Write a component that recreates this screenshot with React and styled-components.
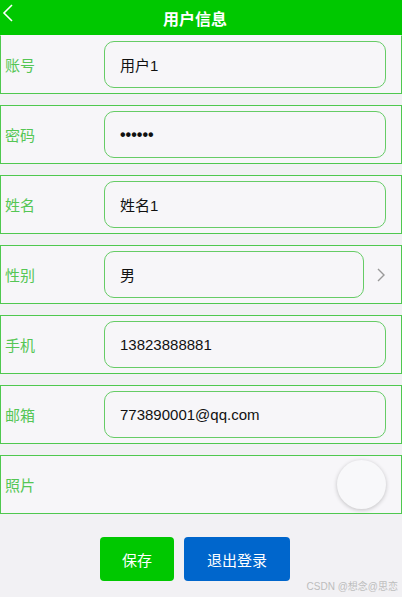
import React from 'react';
import styled, { createGlobalStyle } from 'styled-components';

const GlobalStyle = createGlobalStyle`
  html, body {
    margin: 0;
    padding: 0;
    background: #f2f1f4;
    font-family: "Noto Sans CJK SC", "Noto Sans", sans-serif;
  }
`;

const Page = styled.div`
  width: 402px;
  height: 597px;
  position: relative;
  overflow: hidden;
  background: #f2f1f4;
`;

const Header = styled.div`
  height: 35px;
  background: #00c800;
  display: flex;
  align-items: center;
  justify-content: center;
  position: relative;
  color: #fff;
  font-size: 16px;
  font-weight: 700;
  padding-right: 12px;
`;

const Back = styled.svg`
  position: absolute;
  left: 2px;
  top: 3px;
`;

const Form = styled.div`
  display: flex;
  flex-direction: column;
  gap: 11px;
`;

const Row = styled.div`
  height: 59px;
  box-sizing: border-box;
  border: 1px solid #4fc84f;
  border-top-color: ${(p) => (p.$first ? '#f7f6f9' : '#4fc84f')};
  background: #f7f6f9;
  display: flex;
  align-items: center;
  padding-left: 4px;
  padding-right: ${(p) => (p.$arrow ? '16px' : '15px')};
`;

const Label = styled.div`
  width: 99px;
  color: #55c655;
  font-size: 15px;
`;

const Field = styled.div`
  flex: 1;
  height: 47px;
  box-sizing: border-box;
  border: 1.5px solid #66cc66;
  border-radius: 10px;
  display: flex;
  align-items: center;
  padding-left: 15px;
  color: #111;
  font-size: 15px;
  font-family: "Liberation Sans", "Noto Sans CJK SC", sans-serif;
  margin-right: ${(p) => (p.$arrow ? '13px' : '0')};
`;

const Dots = styled.span`
  font-size: 16px;
  font-weight: 700;
  letter-spacing: 0;
`;

const Chevron = styled.svg`
  flex: none;
`;

const Spacer = styled.div`
  flex: 1;
`;

const Avatar = styled.div`
  width: 49px;
  height: 49px;
  border-radius: 50%;
  background: #f8f8fa;
  box-shadow: 0 1px 4px rgba(0, 0, 0, 0.22);
`;

const Actions = styled.div`
  display: flex;
  justify-content: center;
  gap: 10px;
  margin-top: 23px;
  padding-right: 12px;
`;

const Button = styled.div`
  height: 44px;
  width: ${(p) => p.$w}px;
  border-radius: 4px;
  background: ${(p) => p.$bg};
  color: #fff;
  font-size: 15px;
  display: flex;
  align-items: center;
  justify-content: center;
`;

const Watermark = styled.div`
  position: absolute;
  right: 4px;
  bottom: 4px;
  color: #bdbdbd;
  font-size: 10px;
  font-family: "Liberation Sans", "Noto Sans CJK SC", sans-serif;
`;

const fields = [
  { label: '账号', value: '用户1' },
  { label: '密码', value: 'dots' },
  { label: '姓名', value: '姓名1' },
  { label: '性别', value: '男', arrow: true },
  { label: '手机', value: '13823888881' },
  { label: '邮箱', value: '773890001@qq.com' },
];

export default function App() {
  return (
    <Page>
      <GlobalStyle />
      <Header>
        <Back width="12" height="20" viewBox="0 0 12 20">
          <path d="M10 2 L2 10 L10 18" fill="none" stroke="#fff" strokeWidth="1.6" />
        </Back>
        用户信息
      </Header>
      <Form>
        {fields.map((f, i) => (
          <Row key={f.label} $first={i === 0} $arrow={f.arrow}>
            <Label>{f.label}</Label>
            <Field $arrow={f.arrow}>
              {f.value === 'dots' ? <Dots>••••••</Dots> : f.value}
            </Field>
            {f.arrow && (
              <Chevron width="8" height="14" viewBox="0 0 8 14">
                <path d="M1 1 L7 7 L1 13" fill="none" stroke="#999" strokeWidth="1.4" />
              </Chevron>
            )}
          </Row>
        ))}
        <Row>
          <Label>照片</Label>
          <Spacer />
          <Avatar />
        </Row>
      </Form>
      <Actions>
        <Button $w={74} $bg="#00c800">保存</Button>
        <Button $w={106} $bg="#0066cc">退出登录</Button>
      </Actions>
      <Watermark>CSDN @想念@思恋</Watermark>
    </Page>
  );
}
